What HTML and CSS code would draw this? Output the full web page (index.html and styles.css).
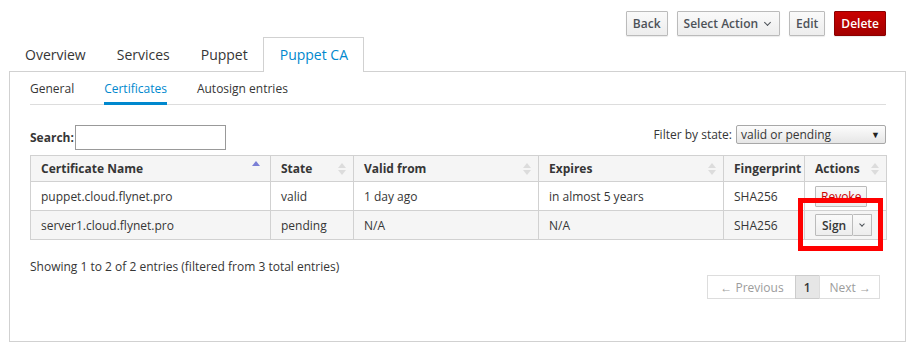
FILE: index.html
```html
<!DOCTYPE html>
<html>
<head>
<meta charset="utf-8">
<link rel="stylesheet" href="styles.css">
</head>
<body>
<div class="page">
  <div class="toolbar">
    <button class="btn">Back</button>
    <button class="btn btn-select">Select Action <span class="caret"></span></button>
    <button class="btn">Edit</button>
    <button class="btn btn-danger">Delete</button>
  </div>
  <ul class="tabs">
    <li class="tab">Overview</li>
    <li class="tab">Services</li>
    <li class="tab">Puppet</li>
    <li class="tab active">Puppet CA</li>
  </ul>
  <div class="panel">
    <ul class="subtabs">
      <li class="subtab">General</li>
      <li class="subtab active">Certificates</li>
      <li class="subtab">Autosign entries</li>
    </ul>
    <div class="controls">
      <label class="search">Search: <span class="input"></span></label>
      <label class="filter">Filter by state: <span class="select">valid or pending<span class="arrow">▼</span></span></label>
    </div>
    <table class="grid">
      <thead>
        <tr>
          <th class="c1">Certificate Name<span class="sort asc"></span></th>
          <th class="c2">State<span class="sort"></span></th>
          <th class="c3">Valid from<span class="sort"></span></th>
          <th class="c4">Expires<span class="sort"></span></th>
          <th class="c5">Fingerprint</th>
          <th class="c6">Actions<span class="sort"></span></th>
        </tr>
      </thead>
      <tbody>
        <tr>
          <td>puppet.cloud.flynet.pro</td>
          <td>valid</td>
          <td>1 day ago</td>
          <td>in almost 5 years</td>
          <td>SHA256</td>
          <td class="act"><button class="sbtn revoke">Revoke</button></td>
        </tr>
        <tr class="odd">
          <td>server1.cloud.flynet.pro</td>
          <td>pending</td>
          <td>N/A</td>
          <td>N/A</td>
          <td>SHA256</td>
          <td class="act">
            <span class="group"><button class="sbtn sign">Sign</button><button class="sbtn drop"><span class="caret"></span></button></span>
            <span class="highlight"></span>
          </td>
        </tr>
      </tbody>
    </table>
    <div class="info">Showing 1 to 2 of 2 entries (filtered from 3 total entries)</div>
    <div class="pager">
      <span class="pg disabled prev">← Previous</span><span class="pg current">1</span><span class="pg disabled next">Next →</span>
    </div>
  </div>
</div>
</body>
</html>
```

FILE: styles.css
```css
* { box-sizing: border-box; }
html, body { margin: 0; padding: 0; background: #fff; }
body { font-family: "Open Sans", "Noto Sans", sans-serif; color: #363636; font-size: 12px; }
.page { width: 910px; height: 348px; padding: 11px 0 0 9px; }

.toolbar { display: flex; justify-content: flex-end; gap: 9px; padding-right: 24px; height: 26px; }
.btn {
  font-family: inherit; font-size: 12px; font-weight: 600; color: #4d5258;
  height: 25px; padding: 0 6px;
  background: linear-gradient(#fafafa, #ededed);
  border: 1px solid #bbb; border-radius: 1px;
  box-shadow: 0 1px 1px rgba(3,3,3,0.08);
  display: inline-flex; align-items: center; gap: 6px;
}
.btn-select { gap: 7px; padding: 0 9px 0 6px; }
.btn-danger { background: linear-gradient(#c90000, #a30000); border-color: #8b0000; color: #fff; padding: 0 6px; }
.caret { display: inline-block; width: 5px; height: 5px; border-right: 1px solid #4d5258; border-bottom: 1px solid #4d5258; transform: rotate(45deg); margin-top: -3px; }

.tabs { list-style: none; margin: 0; padding: 0; display: flex; height: 34px; }
.tab { font-size: 14px; color: #363636; padding: 7px 14px 0 15px; height: 34px; border: 1px solid transparent; border-bottom: none; }
.tab.active { color: #0088ce; border-color: #d1d1d1; background: #fff; padding: 7px 15px 0 16px; height: 35px; }

.panel { width: 897px; height: 271px; border: 1px solid #d1d1d1; padding: 0 20px; }

.subtabs { list-style: none; margin: 0; padding: 0; display: flex; border-bottom: 1px solid #ddd; height: 33px; margin-right: -1px; }
.subtab { font-size: 12px; padding: 8px 0 0; margin-right: 30px; color: #363636; height: 33px; }
.subtab.active { color: #0088ce; border-bottom: 3px solid #0088ce; height: 33px; }

.controls { display: flex; justify-content: space-between; align-items: flex-start; margin-top: 20px; height: 30px; }
.search { font-weight: 700; display: flex; align-items: center; gap: 1px; }
.input { display: inline-block; width: 151px; height: 25px; border: 1px solid #999; background: #fff; }
.filter { display: flex; align-items: center; gap: 4px; font-size: 12px; margin-right: -1px; }
.select {
  display: inline-flex; align-items: center; justify-content: space-between;
  width: 150px; height: 19px; padding: 0 5px 0 4px; font-size: 12px;
  border: 1px solid #a8a8a8; border-radius: 2px; background: linear-gradient(#fcfcfc, #e6e6e6);
}
.arrow { font-size: 9px; color: #222; }

.grid { border-collapse: collapse; width: 856px; table-layout: fixed; }
.grid th, .grid td { border: 1px solid #d1d1d1; text-align: left; padding: 0 10px; position: relative; }
.grid th { background: #f5f5f5; font-weight: 700; height: 26px; font-size: 12px; }
.grid td { height: 29px; font-size: 12px; }
.grid tr.odd td { background: #f5f5f5; }
.c1 { width: 240px; } .c2 { width: 83px; } .c3 { width: 185px; } .c4 { width: 185px; } .c5 { width: 81px; } .c6 { width: 82px; }
.c5 { padding-right: 2px !important; }
.sort { position: absolute; right: 7px; top: 6px; width: 8px; height: 14px; }
.sort::before, .sort::after { content: ""; position: absolute; left: 0; border-left: 4px solid transparent; border-right: 4px solid transparent; }
.sort::before { top: 1px; border-bottom: 5px solid #dcdcdc; }
.sort::after { top: 8px; border-top: 5px solid #dcdcdc; }
.sort.asc { right: 10px; top: 4px; }
.sort.asc::before { border-bottom-color: #7a7fd6; }
.sort.asc::after { display: none; }

.act { padding-left: 10px !important; }
.sbtn {
  font-family: inherit; font-size: 12px; font-weight: 600; height: 21px; padding: 0 6px;
  background: linear-gradient(#fafafa, #ededed); border: 1px solid #bbb; border-radius: 1px; color: #363636;
  display: inline-flex; align-items: center;
}
.revoke { color: #c00; font-weight: 400; padding: 0 5px; }
.group { display: inline-flex; }
.sign { height: 22px; }
.drop { height: 22px; width: 19px; border-left: none; justify-content: center; padding: 0; }
.drop .caret { width: 4px; height: 4px; }
.highlight { position: absolute; left: -7px; top: -13px; width: 85px; height: 53px; border: 5px solid #f00; z-index: 2; }

.info { margin-top: 18px; font-size: 12px; height: 18px; }
.pager { display: flex; justify-content: flex-end; margin-top: -1px; padding-right: 5px; }
.pg { height: 24px; border: 1px solid #ddd; display: inline-flex; align-items: center; font-size: 12px; margin-left: -1px; }
.pg.prev { padding: 0 11px 0 12px; }
.pg.next { padding: 0 8px 0 10px; }
.pg.disabled { color: #9c9c9c; }
.pg.current { background: #e6e6e6; border-color: #ccc; color: #363636; padding: 0 8px; font-weight: 600; }
```
